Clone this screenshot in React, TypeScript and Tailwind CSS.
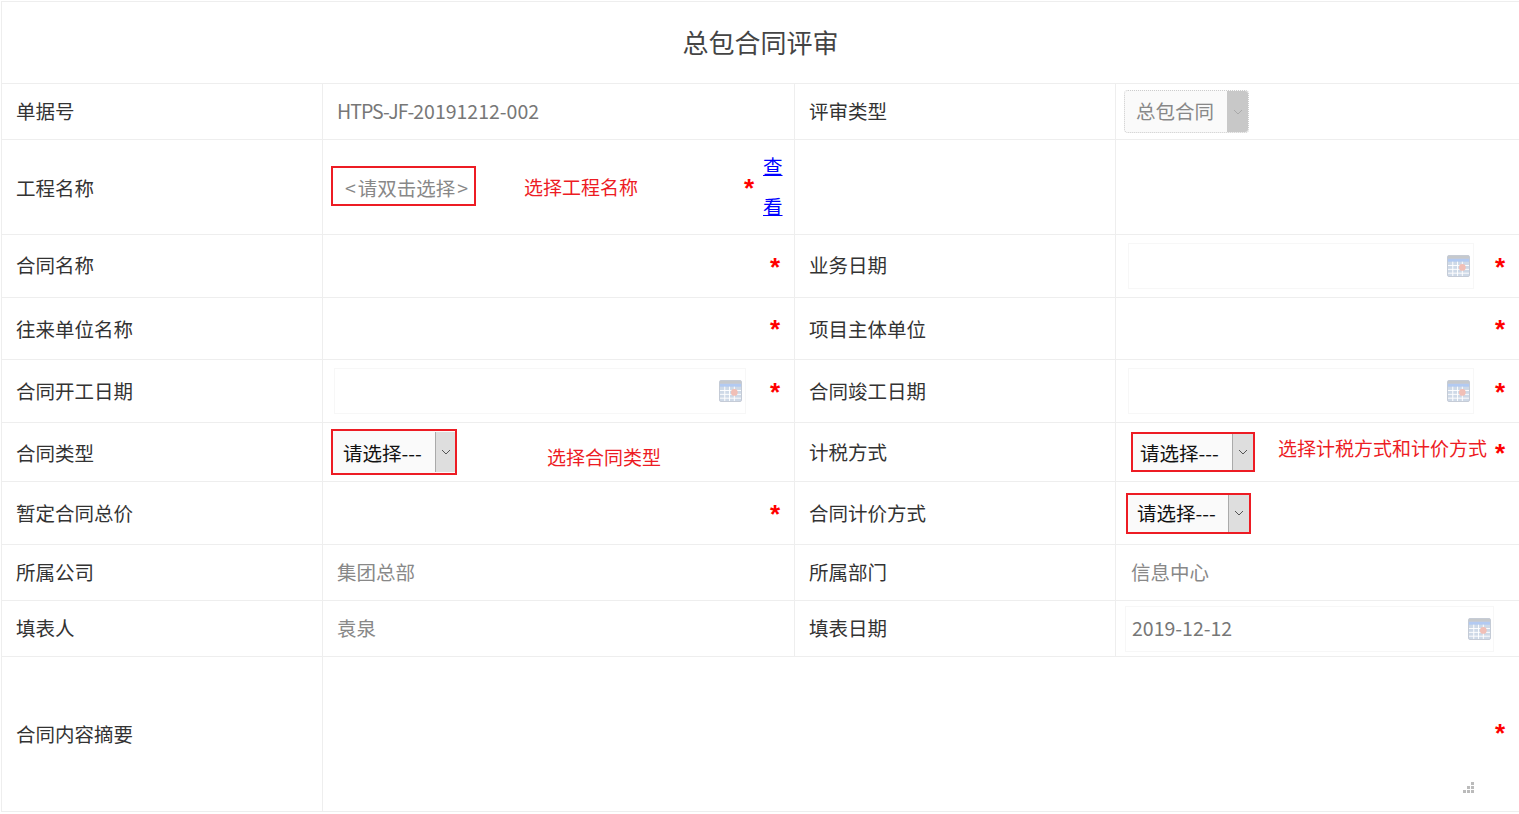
import React from "react";

const Star = ({ className = "" }: { className?: string }) => (
  <span className={"font-['Liberation_Sans'] font-bold text-[26px] leading-[26px] h-[20px] mb-[5px] text-[#ff0000] " + className}>*</span>
);

const Calendar = () => (
  <svg width="23" height="22" viewBox="0 0 24 23" className="shrink-0 opacity-80 blur-[0.5px]">
    <rect x="0.5" y="0.5" width="23" height="22" rx="1.5" fill="#c3d0e2" stroke="#b4bccb" />
    <rect x="1" y="1" width="22" height="3" fill="#b9bcc0" />
    <rect x="1" y="4" width="22" height="3" fill="#9fbdf0" />
    <g stroke="#ffffff" strokeWidth="1">
      <path d="M1 11h22M1 15h22M1 19h22M6 7v15M11 7v15M16 7v15" />
    </g>
    <circle cx="16" cy="13" r="3.5" fill="#eeb0a4" />
  </svg>
);

const Chevron = ({ color }: { color: string }) => (
  <svg width="10" height="6" viewBox="0 0 10 6" fill="none">
    <path d="M1 1l4 4 4-4" stroke={color} strokeWidth="1" />
  </svg>
);

const DateBox = ({ w, value, pr = "pr-[3px]" }: { w: string; value?: string; pr?: string }) => (
  <div className={`${w} ${pr} h-[46px] border border-[#f7f7f7] flex items-center justify-between pl-[6px] shrink-0`}>
    <span className="text-[#777] pb-[2px]">{value}</span>
    <Calendar />
  </div>
);

const RedSelect = ({ w, h, btn, pl, pt = "" }: { w: string; h: string; btn: string; pl: string; pt?: string }) => (
  <div className={`${w} ${h} border-2 border-[#ed1c24] bg-[#fafafa] flex items-stretch shrink-0`}>
    <span className={`flex-1 ${pl} ${pt} flex items-center text-[#111] whitespace-nowrap`}>请选择---</span>
    <span className={`${btn} bg-[#dedede] border-l border-[#aaaaaa] flex items-center justify-center`}>
      <Chevron color="#555" />
    </span>
  </div>
);

const Label = ({ children, adj = "" }: { children: React.ReactNode; adj?: string }) => (
  <td className="border border-[#eeeeee] p-0 align-middle">
    <div className={"pl-[14px] text-[#333] " + adj}>{children}</div>
  </td>
);

const Cell = ({ children, className = "" }: { children?: React.ReactNode; className?: string }) => (
  <td className="border border-[#eeeeee] p-0 align-middle">
    <div className={"flex items-center " + className}>{children}</div>
  </td>
);

export default function App() {
  return (
    <div className="bg-white w-[1519px] h-[814px] overflow-hidden pl-px pt-px font-['Noto_Sans_CJK_SC','Noto_Sans',sans-serif] text-[19.5px]">
      <table className="table-fixed border-collapse w-[1519px]">
        <colgroup>
          <col className="w-[321px]" />
          <col className="w-[472px]" />
          <col className="w-[321px]" />
          <col />
        </colgroup>
        <tbody>
          <tr className="h-[82px]">
            <td colSpan={4} className="border border-[#eeeeee] text-center text-[26px] text-[#444] p-0 pb-[2px]">总包合同评审</td>
          </tr>
          <tr className="h-[56px]">
            <Label adj="pb-[2px]">单据号</Label>
            <Cell className="pl-[14px] pb-[2px] text-[#777]"><span className="tracking-[-1px]">HTPS-JF-</span>20191212-002</Cell>
            <Label adj="pb-[2px]">评审类型</Label>
            <Cell className="pl-[8px]">
              <div className="w-[125px] h-[43px] border border-dotted border-[#cccccc] rounded-[4px] bg-[#fafafa] flex items-stretch overflow-hidden">
                <span className="flex-1 pl-[11px] pb-[2px] flex items-center text-[#888]">总包合同</span>
                <span className="w-[21px] bg-[#c8c8c8] flex items-center justify-center"><Chevron color="#aaa" /></span>
              </div>
            </Cell>
          </tr>
          <tr className="h-[95px]">
            <Label adj="pt-[2px]">工程名称</Label>
            <Cell className="pl-[8px] pr-[11px]">
              <div className="w-[145px] h-[40px] mb-[2px] border-2 border-[#ed1c24] flex items-center pl-[12px] pt-[3px] text-[#888] whitespace-nowrap shrink-0">&lt;<span className="mx-[2px]">请双击选择</span>&gt;</div>
              <span className="ml-[48px] text-[#ed1c24] text-[19px] whitespace-nowrap">选择工程名称</span>
              <Star className="ml-auto mr-[9px]" />
              <a className="w-[20px] leading-[40px] mb-[2px] text-[#0000ff] underline break-all">查看</a>
            </Cell>
            <td className="border border-[#eeeeee] p-0" />
            <td className="border border-[#eeeeee] p-0" />
          </tr>
          <tr className="h-[63px]">
            <Label adj="pb-[2px]">合同名称</Label>
            <Cell className="justify-end pr-[14px]"><Star /></Cell>
            <Label adj="pb-[2px]">业务日期</Label>
            <Cell className="pl-[12px] pr-[14px] justify-between">
              <DateBox w="w-[346px]" />
              <Star />
            </Cell>
          </tr>
          <tr className="h-[62px]">
            <Label>往来单位名称</Label>
            <Cell className="justify-end pr-[14px]"><Star /></Cell>
            <Label>项目主体单位</Label>
            <Cell className="justify-end pr-[14px]"><Star /></Cell>
          </tr>
          <tr className="h-[63px]">
            <Label>合同开工日期</Label>
            <Cell className="pl-[11px] pr-[14px] justify-between">
              <DateBox w="w-[412px]" />
              <Star />
            </Cell>
            <Label>合同竣工日期</Label>
            <Cell className="pl-[12px] pr-[14px] justify-between">
              <DateBox w="w-[346px]" />
              <Star />
            </Cell>
          </tr>
          <tr className="h-[59px]">
            <Label adj="pt-[2px]">合同类型</Label>
            <Cell className="pl-[8px]">
              <RedSelect w="w-[126px]" h="h-[46px]" btn="w-[20px] my-px" pl="pl-[10px]" pt="pt-[2px]" />
              <span className="ml-[90px] mt-[10px] text-[#ed1c24] text-[19px] whitespace-nowrap">选择合同类型</span>
            </Cell>
            <Label>计税方式</Label>
            <Cell className="pl-[15px] pr-[14px]">
              <RedSelect w="w-[124px]" h="h-[40px]" btn="w-[21px]" pl="pl-[7px]" pt="pt-[2px]" />
              <span className="ml-[23px] mb-[8px] text-[#ed1c24] text-[19px] whitespace-nowrap">选择计税方式和计价方式</span>
              <Star className="ml-auto" />
            </Cell>
          </tr>
          <tr className="h-[63px]">
            <Label>暂定合同总价</Label>
            <Cell className="justify-end pr-[14px]"><Star /></Cell>
            <Label>合同计价方式</Label>
            <Cell className="pl-[10px]">
              <RedSelect w="w-[125px]" h="h-[41px]" btn="w-[21px]" pl="pl-[9px]" />
            </Cell>
          </tr>
          <tr className="h-[56px]">
            <Label adj="pb-[2px]">所属公司</Label>
            <Cell className="pl-[14px] pb-[2px] text-[#888]">集团总部</Cell>
            <Label adj="pb-[2px]">所属部门</Label>
            <Cell className="pl-[15px] pb-[2px] text-[#888]">信息中心</Cell>
          </tr>
          <tr className="h-[56px]">
            <Label adj="pb-[2px]">填表人</Label>
            <Cell className="pl-[14px] pb-[2px] text-[#888]">袁泉</Cell>
            <Label adj="pb-[2px]">填表日期</Label>
            <Cell className="pl-[9px]">
              <DateBox w="w-[369px]" value="2019-12-12" pr="pr-[2px]" />
            </Cell>
          </tr>
          <tr className="h-[155px]">
            <Label>合同内容摘要</Label>
            <td colSpan={3} className="border border-[#eeeeee] p-0 relative">
              <div className="flex justify-end pr-[14px] mb-[4px]"><Star /></div>
              <svg width="11" height="11" viewBox="0 0 11 11" fill="#bbbbbb" className="absolute right-[45px] bottom-[18px]">
                <rect x="8" y="0" width="3" height="3" />
                <rect x="4" y="4" width="3" height="3" />
                <rect x="8" y="4" width="3" height="3" />
                <rect x="0" y="8" width="3" height="3" />
                <rect x="4" y="8" width="3" height="3" />
                <rect x="8" y="8" width="3" height="3" />
              </svg>
            </td>
          </tr>
        </tbody>
      </table>
    </div>
  );
}
